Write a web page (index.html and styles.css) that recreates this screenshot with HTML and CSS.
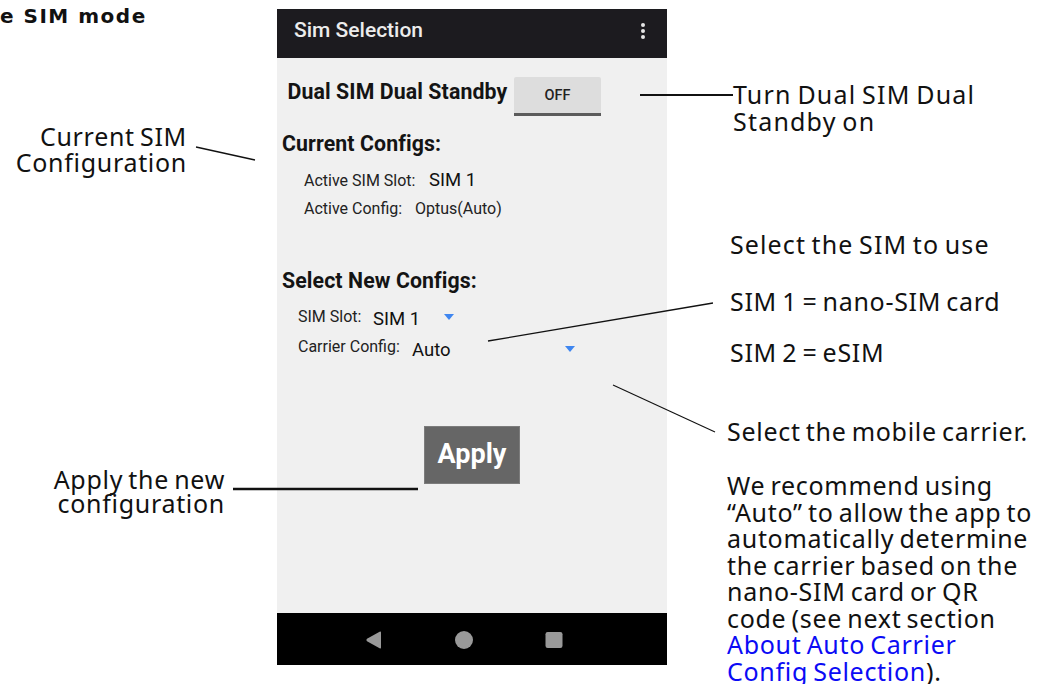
FILE: index.html
```html
<!DOCTYPE html>
<html lang="en">
<head>
<meta charset="utf-8">
<title>Sim Selection</title>
<link rel="stylesheet" href="styles.css">
</head>
<body>
<div class="page">
  <aside class="left">
    <h2 class="doc-head">e SIM mode</h2>
    <p class="note note-current">Current SIM<br>Configuration</p>
    <p class="note note-apply">Apply the new<br>configuration</p>
  </aside>

  <div class="phone">
    <header class="appbar">
      <span class="appbar-title">Sim Selection</span>
      <svg class="kebab" width="6" height="18" viewBox="0 0 6 18"><circle cx="3" cy="3" r="2"/><circle cx="3" cy="9" r="2"/><circle cx="3" cy="15" r="2"/></svg>
    </header>
    <main class="screen">
      <div class="dsds-row">
        <span class="dsds-label">Dual SIM Dual Standby</span>
        <button class="toggle">OFF</button>
      </div>

      <h3 class="section-head">Current Configs:</h3>
      <div class="info-row">
        <span class="info-label w-slot">Active SIM Slot:</span>
        <span class="info-value big">SIM 1</span>
      </div>
      <div class="info-row">
        <span class="info-label w-config">Active Config:</span>
        <span class="info-value">Optus(Auto)</span>
      </div>

      <h3 class="section-head section-new">Select New Configs:</h3>
      <div class="spin-row first">
        <span class="spin-label w-simslot">SIM Slot:</span>
        <span class="spinner sp-slot"><span class="spin-value">SIM 1</span><span class="caret"></span></span>
      </div>
      <div class="spin-row second">
        <span class="spin-label w-carrier">Carrier Config:</span>
        <span class="spinner sp-carrier"><span class="spin-value">Auto</span><span class="caret"></span></span>
      </div>

      <button class="apply">Apply</button>
    </main>
    <nav class="navbar">
      <svg width="20" height="20" viewBox="0 0 20 20"><path d="M17 2.5 V17.5 Q17 19 15.6 18.2 L3 11.2 Q1.6 10 3 8.8 L15.6 1.8 Q17 1 17 2.5 Z"/></svg>
      <svg width="20" height="20" viewBox="0 0 20 20"><circle cx="10" cy="10" r="9"/></svg>
      <svg width="20" height="20" viewBox="0 0 20 20"><rect x="1.5" y="2" width="17" height="16" rx="2.2"/></svg>
    </nav>
  </div>

  <aside class="right">
    <p class="note note-dsds">Turn Dual SIM Dual<br>Standby on</p>
    <p class="note note-select">Select the SIM to use</p>
    <p class="note note-sim1">SIM 1 = nano-SIM card</p>
    <p class="note note-sim2">SIM 2 = eSIM</p>
    <p class="note note-carrier">Select the mobile carrier.</p>
    <p class="note note-recommend">We recommend using<br>“Auto” to allow the app to<br>automatically determine<br>the carrier based on the<br>nano-SIM card or QR<br>code (see next section<br><a class="doc-link" href="#auto">About Auto Carrier<br>Config Selection</a>).</p>
  </aside>

  <svg class="leaders" width="1045" height="684" viewBox="0 0 1045 684">
    <line x1="640" y1="95" x2="733" y2="95" stroke-width="2"/>
    <line x1="196" y1="147" x2="255" y2="160" stroke-width="1.3"/>
    <line x1="488" y1="341" x2="713" y2="303" stroke-width="1.3"/>
    <line x1="613" y1="385" x2="715" y2="432" stroke-width="1.1"/>
    <line x1="233" y1="489" x2="418" y2="489" stroke-width="2.5"/>
  </svg>
</div>
</body>
</html>
```

FILE: styles.css
```css
html, body {
  margin: 0;
  padding: 0;
  width: 1045px;
  height: 684px;
  overflow: hidden;
  background: #ffffff;
}

.page {
  position: relative;
  display: flex;
  width: 1045px;
  height: 684px;
  font-family: "Noto Sans", "Open Sans", sans-serif;
  color: #111;
}

/* ---------- annotations ---------- */
.note {
  margin: 0;
  font-size: 25px;
  line-height: 26.5px;
  letter-spacing: 0.7px;
  word-spacing: -2px;
  white-space: nowrap;
  font-weight: 400;
}

.left {
  width: 277px;
  flex: 0 0 277px;
  display: flex;
  flex-direction: column;
}

.doc-head {
  margin: 5px 0 0 0;
  font-family: "DejaVu Sans", "Noto Sans", sans-serif;
  font-size: 20px;
  line-height: 23px;
  font-weight: 700;
  letter-spacing: 1.5px;
  white-space: nowrap;
  color: #111;
}

.note-current {
  margin-top: 94.5px;
  line-height: 26px;
  text-align: right;
  padding-right: 90px;
}

.note-apply {
  margin-top: 292px;
  line-height: 24.5px;
  text-align: right;
  padding-right: 52px;
}

.right {
  flex: 1;
  display: flex;
  flex-direction: column;
  padding-left: 60px;
}

.note-dsds {
  margin-top: 81px;
  margin-left: 6px;
  line-height: 27px;
  letter-spacing: 1.2px;
}
.note-select {
  margin-top: 96px;
  margin-left: 3px;
  letter-spacing: 1.1px;
}
.note-sim1 {
  margin-top: 30.5px;
  margin-left: 3px;
}
.note-sim2 {
  margin-top: 24.5px;
  margin-left: 3px;
}
.note-carrier {
  margin-top: 52px;
}
.note-recommend {
  margin-top: 28px;
}
.doc-link {
  color: #0b0bf5;
  text-decoration: none;
}

/* ---------- phone ---------- */
.phone {
  width: 390px;
  flex: 0 0 390px;
  margin-top: 9px;
  height: 656px;
  display: flex;
  flex-direction: column;
  font-family: Roboto, "Noto Sans", sans-serif;
}

.appbar {
  height: 49px;
  flex: 0 0 49px;
  background: #1c1b1f;
  display: flex;
  align-items: flex-start;
  justify-content: space-between;
  padding: 0 21px 0 17px;
  box-sizing: border-box;
}
.appbar-title {
  font-size: 21px;
  line-height: 42px;
  font-weight: 500;
  color: #ececec;
}
.kebab {
  margin-top: 13px;
  fill: #e6e6e6;
}

.screen {
  height: 555px;
  flex: 0 0 555px;
  background: #f0f0f0;
  display: flex;
  flex-direction: column;
  color: #161616;
}

.dsds-row {
  display: flex;
  align-items: flex-start;
  margin-top: 19px;
  padding-left: 10.5px;
}
.dsds-label {
  width: 226.5px;
  font-size: 21.3px;
  line-height: 29px;
  font-weight: 700;
  letter-spacing: 0.1px;
  white-space: nowrap;
  color: #141414;
}
.toggle {
  width: 87px;
  height: 39px;
  box-sizing: border-box;
  border: none;
  border-bottom: 3px solid #5b5b5b;
  border-radius: 2px 2px 0 0;
  background: #dddddd;
  font-family: Roboto, sans-serif;
  font-size: 14.5px;
  font-weight: 500;
  color: #222;
  padding: 0;
}

.section-head {
  margin: 13px 0 0 0;
  padding-left: 5px;
  font-size: 21.3px;
  line-height: 29px;
  font-weight: 700;
  letter-spacing: 0.1px;
  color: #141414;
}
.section-new {
  margin-top: 43px;
}

.info-row {
  display: flex;
  align-items: baseline;
  padding-left: 27px;
}
.section-head + .info-row {
  margin-top: 8px;
}
.info-label {
  font-size: 16px;
  line-height: 28px;
  color: #222;
}
.w-slot { width: 125px; }
.w-config { width: 111px; }
.info-value {
  font-size: 16px;
  line-height: 28px;
  color: #222;
}
.info-value.big {
  font-size: 18.5px;
  color: #111;
}

.spin-row {
  display: flex;
  align-items: flex-start;
  height: 30px;
  padding-left: 21px;
}
.spin-row.first {
  margin-top: 8.8px;
}
.spin-label {
  font-size: 16px;
  line-height: 26px;
  color: #222;
}
.w-simslot { width: 75px; }
.w-carrier { width: 114px; }
.spinner {
  display: flex;
  align-items: flex-start;
}
.sp-slot { width: 81px; }
.sp-carrier { width: 163px; }
.spin-value {
  font-size: 18.5px;
  line-height: 26px;
  color: #111;
}
.first .spin-value { margin-top: 2.2px; }
.second .spin-value { margin-top: 3.2px; }
.caret {
  margin-left: auto;
  width: 0;
  height: 0;
  border-left: 5.5px solid transparent;
  border-right: 5.5px solid transparent;
  border-top: 6px solid #3f86f0;
}
.first .caret { margin-top: 10.5px; }
.second .caret { margin-top: 12.5px; }

.apply {
  margin: 62.5px auto 0 auto;
  width: 96px;
  height: 58px;
  box-sizing: border-box;
  border: 1px solid #7c7c7c;
  background: #666666;
  color: #ffffff;
  font-family: Roboto, sans-serif;
  font-size: 27px;
  font-weight: 700;
  padding: 0 0 2px 0;
}

.navbar {
  height: 52px;
  flex: 0 0 52px;
  background: #000;
  display: flex;
  align-items: center;
  padding-left: 87px;
  gap: 70px;
}
.navbar svg {
  fill: #999999;
  margin-top: 1px;
}

/* ---------- leader lines ---------- */
.leaders {
  position: absolute;
  left: 0;
  top: 0;
  pointer-events: none;
  stroke: #111;
}
```
